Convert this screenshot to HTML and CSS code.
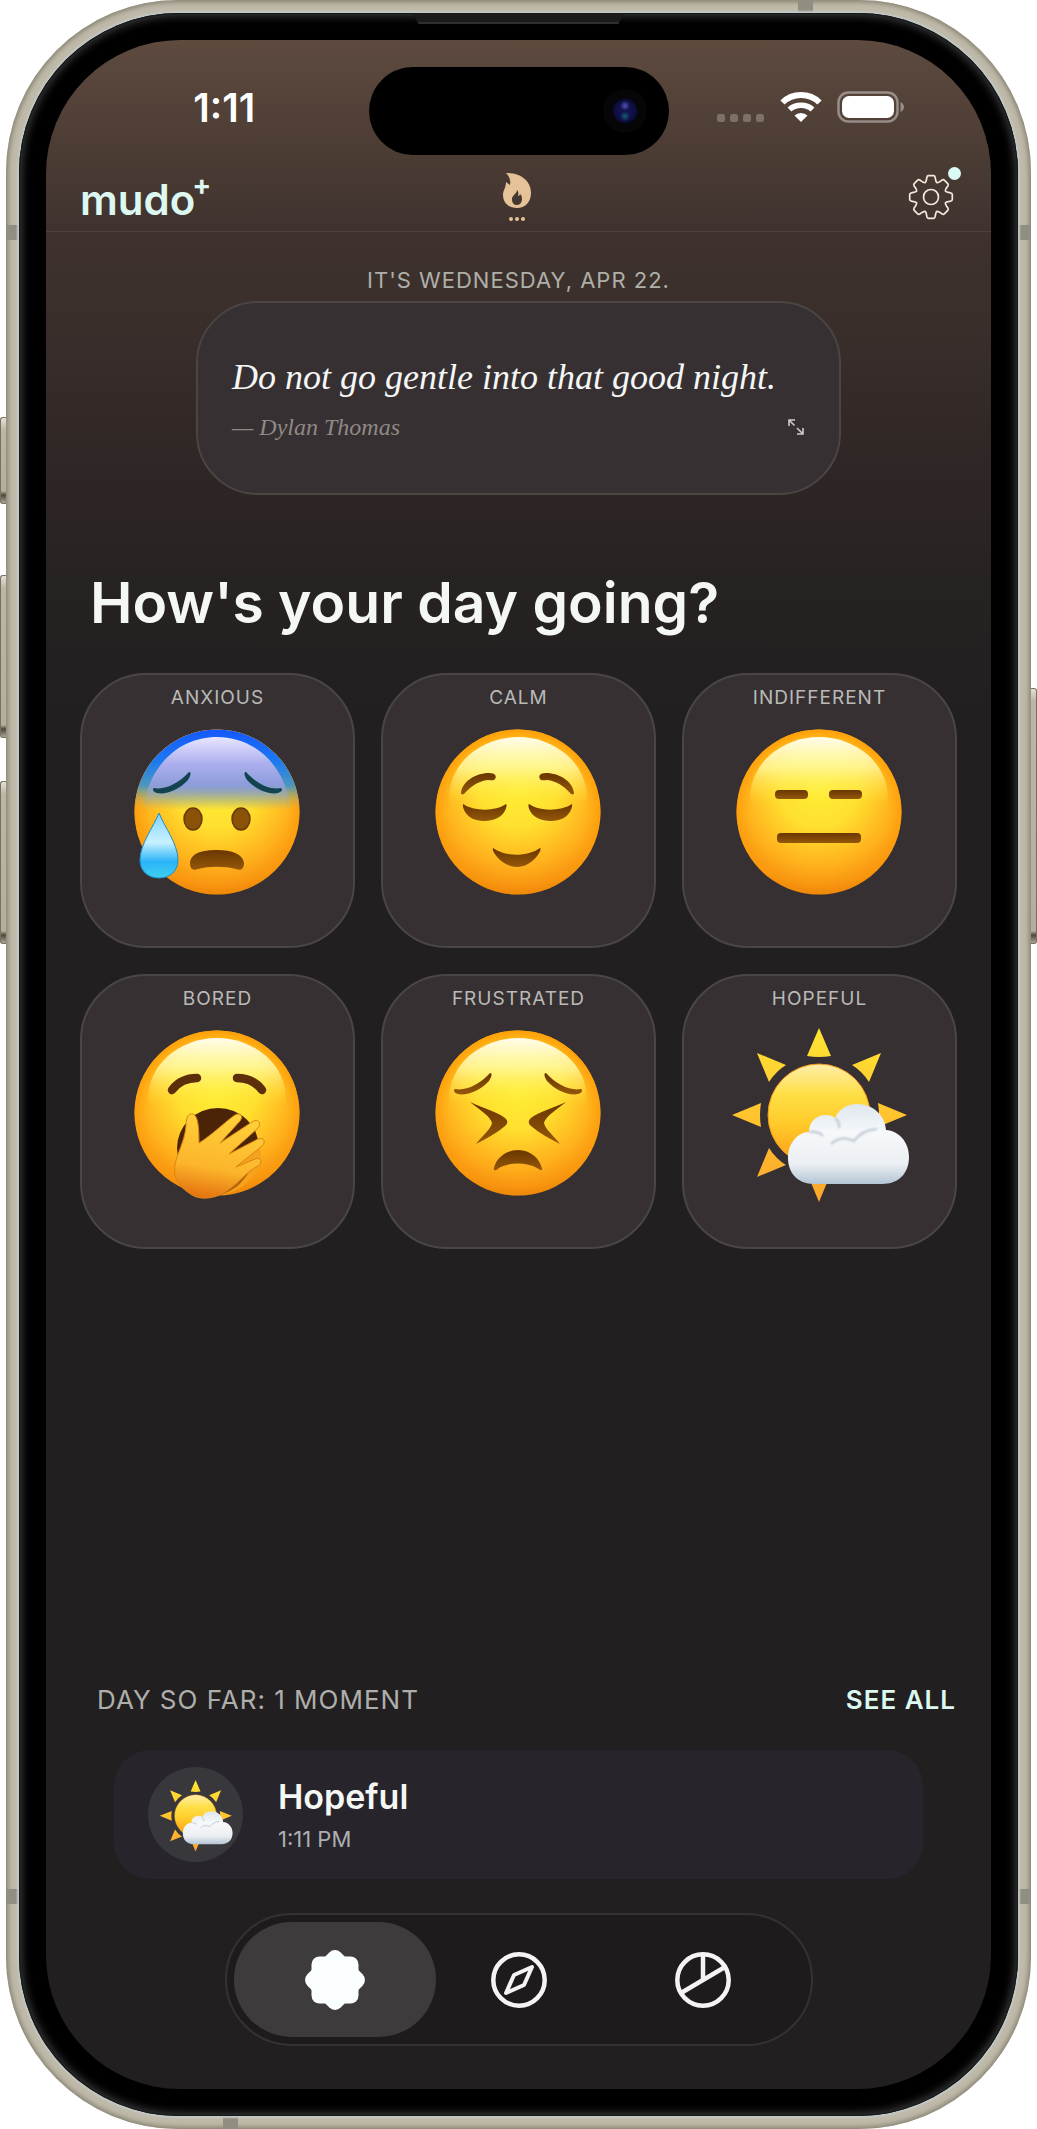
FILE: index.html
```html
<!DOCTYPE html>
<html lang="en">
<head>
<meta charset="utf-8">
<meta name="viewport" content="width=device-width, initial-scale=1">
<title>mudo+</title>
<link rel="stylesheet" href="styles.css">
</head>
<body>
<svg class="defs" aria-hidden="true">
  <defs>
    <radialGradient id="face" cx="89" cy="66" r="112" gradientUnits="userSpaceOnUse">
      <stop offset="0" stop-color="#ffee35"/>
      <stop offset=".35" stop-color="#ffe02f"/>
      <stop offset=".7" stop-color="#ffb01c"/>
      <stop offset=".88" stop-color="#f89410"/>
      <stop offset="1" stop-color="#d96a04"/>
    </radialGradient>
    <radialGradient id="rim" cx="89" cy="96" r="90" gradientUnits="userSpaceOnUse">
      <stop offset=".76" stop-color="#ffa30c" stop-opacity="0"/>
      <stop offset="1" stop-color="#ff9a05"/>
    </radialGradient>
    <linearGradient id="shine" x1="0" y1="16" x2="0" y2="82" gradientUnits="userSpaceOnUse">
      <stop offset="0" stop-color="#fffde8"/>
      <stop offset=".45" stop-color="#fffaa0" stop-opacity=".8"/>
      <stop offset="1" stop-color="#ffec3a" stop-opacity="0"/>
    </linearGradient>
    <linearGradient id="blue" x1="0" y1="7" x2="0" y2="88" gradientUnits="userSpaceOnUse">
      <stop offset="0" stop-color="#1557ff"/>
      <stop offset=".4" stop-color="#1c7af0"/>
      <stop offset=".7" stop-color="#4c97bd"/>
      <stop offset="1" stop-color="#c8b458" stop-opacity="0"/>
    </linearGradient>
    <linearGradient id="brow-sky" x1="0" y1="16" x2="0" y2="88" gradientUnits="userSpaceOnUse">
      <stop offset="0" stop-color="#e6e4ff"/>
      <stop offset=".35" stop-color="#aeb0ee"/>
      <stop offset=".65" stop-color="#8d9cdb"/>
      <stop offset="1" stop-color="#b9b878" stop-opacity="0"/>
    </linearGradient>
    <linearGradient id="ink" x1="0" y1="0" x2="0" y2="1">
      <stop offset="0" stop-color="#6a3600"/>
      <stop offset="1" stop-color="#94580a"/>
    </linearGradient>
    <linearGradient id="tear" x1="0" y1="0" x2="0" y2="1">
      <stop offset="0" stop-color="#7fd4fb"/>
      <stop offset=".45" stop-color="#c9f1ff"/>
      <stop offset=".75" stop-color="#2ab4f8"/>
      <stop offset="1" stop-color="#3fd0ee"/>
    </linearGradient>
    <linearGradient id="hand" x1=".6" y1="0" x2=".4" y2="1">
      <stop offset="0" stop-color="#ffd23a"/>
      <stop offset=".65" stop-color="#fcb52c"/>
      <stop offset="1" stop-color="#e5740f"/>
    </linearGradient>
    <linearGradient id="sun" x1="0" y1="0" x2="0" y2="1">
      <stop offset="0" stop-color="#ffeeaa"/>
      <stop offset=".3" stop-color="#ffdf45"/>
      <stop offset=".6" stop-color="#ffc928"/>
      <stop offset="1" stop-color="#fb9a17"/>
    </linearGradient>
    <linearGradient id="rays" x1="0" y1="4" x2="0" y2="180" gradientUnits="userSpaceOnUse">
      <stop offset="0" stop-color="#ffe534"/>
      <stop offset=".5" stop-color="#ffc42e"/>
      <stop offset="1" stop-color="#fba52c"/>
    </linearGradient>
    <linearGradient id="cloud" x1="0" y1="0" x2="0" y2="1">
      <stop offset="0" stop-color="#dfe7ee"/>
      <stop offset=".35" stop-color="#f6f8fa"/>
      <stop offset=".75" stop-color="#eceff3"/>
      <stop offset="1" stop-color="#b4c5d4"/>
    </linearGradient>
    <filter id="soft" x="-20%" y="-20%" width="140%" height="140%"><feGaussianBlur stdDeviation="1.2"/></filter>
    <clipPath id="head"><circle cx="89" cy="90" r="82.500"/></clipPath>

    <symbol id="base" viewBox="0 0 180 180">
      <circle cx="89" cy="90" r="82.500" fill="url(#face)"/>
      <circle cx="89" cy="90" r="82.500" fill="url(#rim)"/>
      <ellipse cx="89" cy="76" rx="69" ry="61" fill="url(#shine)"/>
    </symbol>
    <path id="worried-brow" d="M26 66C37 68 50 62 61 50C64 50 62 55 60 58C52 67 38 73 29 71C25 70 24 67 26 66Z"/>
    <path id="calm-brow" d="M32 71C33 60 46 51 60 51C66 51 68 54 66 57C65 59 62 58 59 58C49 59 41 65 35 72C33 73 32 72 32 71Z"/>
    <path id="closed-eye" d="M34 82C44 89 66 90 77 82C79 83 76 99 55 99C36 99 33 84 34 82Z"/>
    <path id="squint" d="M41 79C52 84 70 90 76 95C79 98 79 100 76 103C68 110 58 115 47 121C53 113 62 106 63 100C62 94 50 86 41 79Z"/>
    <symbol id="hopeful" viewBox="0 0 180 180">
      <g fill="url(#rays)">
        <path d="M89 5L101 33Q89 35 77 33Z"/>
        <path d="M151 30L139 59Q132 48 122 42Z"/>
        <path d="M177 92L148 104Q150 92 148 80Z"/>
        <path d="M89 179L77 150H101Z"/>
        <path d="M27 154L39 125Q46 136 56 142Z"/>
        <path d="M2 92L31 80Q29 92 31 104Z"/>
        <path d="M27 30L56 42Q46 48 39 59Z"/>
      </g>
      <circle cx="89" cy="92" r="51" fill="url(#sun)" stroke="#f7951a" stroke-width="1"/>
      <path d="M84 161C67 161 58 149 58 135C58 120 68 109 79 109C79 98 87 92 96 92C100 92 103 93 105 95C109 86 117 81 127 81C143 81 155 92 156 107C169 108 179 119 179 134C179 150 169 161 152 161Z" fill="url(#cloud)"/>
      <g fill="none" stroke="#b9c4cf" stroke-width="2" filter="url(#soft)">
        <path d="M79 109Q88 108 93 113M105 95Q110 99 109 105M101 121Q111 112 124 118Q132 107 147 106"/>
      </g>
    </symbol>
    <path id="cog-tooth" d="M-6 -14.4C-4.8 -14.9 -4.7 -16.5 -4.2 -19.5Q-3.8 -21.3 -2.5 -21.3H2.5Q3.8 -21.3 4.2 -19.5C4.7 -16.5 4.8 -14.9 6 -14.4"/>
  </defs>
</svg>

<div class="phone">
  <i class="key key-action"></i><i class="key key-up"></i><i class="key key-down"></i><i class="key key-power"></i>
  <i class="band band-left band-high"></i><i class="band band-right band-high"></i>
  <i class="band band-left band-low"></i><i class="band band-right band-low"></i>
  <i class="band band-top"></i><i class="band band-bottom"></i>
  <div class="bezel">
    <i class="speaker"></i>
    <div class="screen">
      <div class="status">
        <time class="clock">1:11</time>
        <div class="island"><i class="camera"></i></div>
        <div class="signals">
          <svg width="48" height="32" viewBox="0 0 48 32" fill="#fff" fill-opacity=".25" aria-label="No signal">
            <rect y="23" width="8" height="8" rx="2.5"/><rect x="13" y="23" width="8" height="8" rx="2.5"/><rect x="26" y="23" width="8" height="8" rx="2.5"/><rect x="39" y="23" width="8" height="8" rx="2.5"/>
          </svg>
          <svg width="42" height="32" viewBox="0 0 42 32" fill="none" stroke="#fff" aria-label="Wi-Fi">
            <path d="M2.5 11.5Q10 4 21 4T39.500 11.500" stroke-width="6"/>
            <path d="M9.500 18.500Q14 14.200 21 14.200T32.500 18.500" stroke-width="5.500"/>
            <path d="M21 31L14.500 24.500Q17 22 21 22T27.500 24.500Z" fill="#fff" stroke="none"/>
          </svg>
          <svg width="68" height="32" viewBox="0 0 68 32" aria-label="Battery full">
            <rect x="1.500" y="1.500" width="59" height="29" rx="10" fill="none" stroke="#fff" stroke-opacity=".4" stroke-width="2.500"/>
            <rect x="5" y="5" width="52" height="22" rx="7" fill="#fff"/>
            <path d="M63.500 11Q67 13 67 16T63.500 21Z" fill="#fff" fill-opacity=".4"/>
          </svg>
        </div>
      </div>

      <header class="topbar">
        <a class="logo" href="#">mudo<span class="plus">+</span></a>
        <button class="streak" type="button" aria-label="Streak">
          <svg width="28" height="49" viewBox="0 0 28 49" fill="#e6c298">
            <path fill-rule="evenodd" d="M3 0C18 0 28 8 28 20C28 29 22 35 14 35C6 35 0 30 0 22C0 17 3 15 3 9L7 12C8 7 6 3 3 0ZM14 17C14 21 9 22 9 26C9 30 11 32 14 32C17 32 19 29 19 26C19 23 18 22 17 21C17 22 16 23 15 23C16 20 15 18 14 17Z"/>
            <circle cx="8" cy="46" r="2"/><circle cx="14" cy="46" r="2"/><circle cx="20" cy="46" r="2"/>
          </svg>
        </button>
        <button class="settings" type="button" aria-label="Settings">
          <svg width="46" height="46" viewBox="-23 -23 46 46" fill="none" stroke="#f5e9dc" stroke-width="1.700">
            <circle r="7.500"/>
            <use href="#cog-tooth"/><use href="#cog-tooth" transform="rotate(45)"/><use href="#cog-tooth" transform="rotate(90)"/><use href="#cog-tooth" transform="rotate(135)"/><use href="#cog-tooth" transform="rotate(180)"/><use href="#cog-tooth" transform="rotate(225)"/><use href="#cog-tooth" transform="rotate(270)"/><use href="#cog-tooth" transform="rotate(315)"/>
          </svg>
          <i class="notice"></i>
        </button>
      </header>

      <main class="content">
        <p class="date">IT'S WEDNESDAY, APR 22.</p>
        <figure class="quote">
          <blockquote class="quote-text">Do not go gentle into that good night.</blockquote>
          <div class="quote-foot">
            <figcaption class="quote-by">— Dylan Thomas</figcaption>
            <button class="expand" type="button" aria-label="Expand quote">
              <svg width="18" height="18" viewBox="0 0 18 18" fill="none" stroke="#cfcbc8" stroke-width="1.600"><path d="M2 8V2H8M2 2L7.500 7.500M10 10L16 16M10 16H16V10"/></svg>
            </button>
          </div>
        </figure>

        <h1 class="question">How's your day going?</h1>

        <div class="moods">
          <button class="mood" type="button"><span class="mood-name">ANXIOUS</span>
            <svg class="emoji" viewBox="0 0 180 180">
              <use href="#base"/>
              <rect x="6" y="6" width="168" height="84" fill="url(#blue)" clip-path="url(#head)"/>
              <path d="M15 88C21 40 54 15 89 15C124 15 157 40 163 88Z" fill="url(#brow-sky)"/>
              <g fill="#12444f"><use href="#worried-brow"/><use href="#worried-brow" transform="translate(179) scale(-1 1)"/></g>
              <g fill="#8a5207" stroke="#69390a" stroke-width="1.500"><ellipse cx="65" cy="97" rx="9" ry="11"/><ellipse cx="113" cy="97" rx="9" ry="11"/></g>
              <path d="M62 141C63 131 74 128 89 128C104 128 115 132 116 141C116 147 113 149 108 147C96 144 82 144 70 147C65 149 62 147 62 141Z" fill="url(#ink)"/>
              <path d="M31 91C36 104 50 122 50 138C50 149 42 156 31 156C20 156 12 149 12 138C12 122 26 104 31 91Z" fill="url(#tear)" stroke="#1a8fd0"/>
            </svg></button>
          <button class="mood" type="button"><span class="mood-name">CALM</span>
            <svg class="emoji" viewBox="0 0 180 180">
              <use href="#base"/>
              <g fill="url(#ink)"><use href="#calm-brow"/><use href="#calm-brow" transform="translate(177) scale(-1 1)"/>
              <use href="#closed-eye"/><use href="#closed-eye" transform="translate(177) scale(-1 1)"/>
              <path d="M64 126C76 135 99 135 111 126C114 127 104 145 88 145C73 145 62 129 64 126Z"/></g>
            </svg></button>
          <button class="mood" type="button"><span class="mood-name">INDIFFERENT</span>
            <svg class="emoji" viewBox="0 0 180 180">
              <use href="#base"/>
              <g fill="url(#ink)"><rect x="45" y="68" width="33" height="9" rx="4"/><rect x="99" y="68" width="33" height="9" rx="4"/><rect x="47" y="111" width="84" height="10" rx="4"/></g>
            </svg></button>
          <button class="mood" type="button"><span class="mood-name">BORED</span>
            <svg class="emoji" viewBox="0 0 180 180">
              <use href="#base"/>
              <path d="M44 67C50 59 59 55 69 55M134 67C128 59 119 55 109 55" fill="none" stroke="#5c2f0a" stroke-width="8.500" stroke-linecap="round"/>
              <ellipse cx="90" cy="125" rx="41" ry="40" fill="#4b2407"/>
              <path d="M132 122L134 142C122 160 108 170 93 171L88 150Z" fill="#f5a31c"/>
              <path d="M108 144L101 131L128 117L131 124Z" fill="#4b2407"/>
              <path d="M122 147C115 160 106 168 92 172Q100 166 108 154Z" fill="#b9630c"/>
              <path d="M58 103C58 93 61 90 65 91C70 93 71 104 71 120C84 112 98 98 107 92C112 89 116 93 112 98L92 120L124 99C130 95 134 100 130 105L101 131L128 117C135 113 139 118 134 123L108 144L127 136C133 134 135 139 130 143C118 149 112 159 100 167C90 175 74 178 64 172C50 163 45 156 47 142C49 130 57 118 58 103Z" fill="url(#hand)" stroke="#d98714"/>
            </svg></button>
          <button class="mood" type="button"><span class="mood-name">FRUSTRATED</span>
            <svg class="emoji" viewBox="0 0 180 180">
              <use href="#base"/>
              <g fill="url(#ink)"><use href="#worried-brow"/><use href="#worried-brow" transform="translate(178) scale(-1 1)"/>
              <use href="#squint"/><use href="#squint" transform="translate(178) scale(-1 1)"/>
              <path d="M65 145C67 136 76 127 89 127C102 127 111 136 113 146C113 148 111 147 108 145C98 139 80 139 70 145C67 148 64 148 65 145Z"/></g>
            </svg></button>
          <button class="mood" type="button"><span class="mood-name">HOPEFUL</span>
            <svg class="emoji" viewBox="0 0 180 180"><use href="#hopeful"/></svg></button>
        </div>

        <section class="day">
          <div class="day-head">
            <h2 class="day-title">DAY SO FAR: 1 MOMENT</h2>
            <a class="see-all" href="#">SEE ALL</a>
          </div>
          <a class="moment" href="#">
            <span class="moment-icon"><svg width="74" height="74" viewBox="0 0 180 180"><use href="#hopeful"/></svg></span>
            <span class="moment-text"><strong class="moment-name">Hopeful</strong><time class="moment-time">1:11 PM</time></span>
          </a>
        </section>
      </main>

      <nav class="tabs">
        <button class="tab tab-on" type="button" aria-label="Today">
          <svg width="60" height="60" viewBox="-30 -30 60 60" fill="#fbffff"><rect x="-23.500" y="-23.500" width="47" height="47" rx="8"/><rect x="-23.500" y="-23.500" width="47" height="47" rx="8" transform="rotate(45)"/></svg>
        </button>
        <button class="tab" type="button" aria-label="Explore">
          <svg width="60" height="60" viewBox="-30 -30 60 60" fill="none" stroke="#f7f2f4" stroke-linejoin="round"><circle r="25.700" stroke-width="4.500"/><path d="M13 -13L5 5L-13 13L-5 -5Z" stroke-width="4"/></svg>
        </button>
        <button class="tab" type="button" aria-label="Insights">
          <svg width="60" height="60" viewBox="-30 -30 60 60" fill="none" stroke="#f7f2f4" stroke-width="4.500"><circle r="25.700"/><path d="M0 -26V0M22 -13L-22 13"/></svg>
        </button>
      </nav>
    </div>
  </div>
</div>
</body>
</html>
```
FILE: styles.css
```css
* { box-sizing: border-box; }

body {
  margin: 0;
  background: #fff;
  font-family: Inter, "Liberation Sans", sans-serif;
  color: #f5f7f4;
}

h1, h2, p, figure, blockquote { margin: 0; }
button { padding: 0; border: 0; background: none; font: inherit; color: inherit; }
a { color: inherit; text-decoration: none; }
svg { display: block; }

.defs { position: absolute; width: 0; height: 0; }

/* Device shell */
.phone {
  position: relative;
  display: flex;
  min-height: 100vh;
  margin: 0 6px;
  padding: 13px;
  border-radius: 172px;
  background: #bfb9a9;
  box-shadow: inset 0 0 5px 2px #868070;
}

.bezel {
  position: relative;
  display: flex;
  flex: 1;
  min-width: 0;
  padding: 27px;
  border-radius: 160px;
  background: #000;
  box-shadow: 0 0 2px 2px #c4c9c7, inset 0 0 0 1px #15191a, inset 0 0 9px 3px #3a3b3b;
}

.speaker {
  position: absolute;
  top: 1px;
  left: 50%;
  width: 212px;
  height: 10px;
  margin-left: -106px;
  background: #1b1b1b;
  border-bottom: 2px solid #303030;
  clip-path: polygon(0 0, 100% 0, 97% 100%, 3% 100%);
}

.key {
  position: absolute;
  left: -6px;
  width: 6px;
  border: 1px solid #77715f;
  border-right: 0;
  border-radius: 3px 0 0 3px;
  background: linear-gradient(#e4e0d8, #bdb6a5 12px, #b5ae9c calc(100% - 12px), #4d483d calc(100% - 8px), #aaa494);
}
.key-action { top: 417px; height: 87px; }
.key-up { top: 575px; height: 163px; }
.key-down { top: 781px; height: 163px; }
.key-power {
  top: 688px;
  right: -6px;
  left: auto;
  height: 256px;
  border-right: 1px solid #77715f;
  border-left: 0;
  border-radius: 0 3px 3px 0;
}

.band { position: absolute; width: 13px; height: 15px; background: #908e80; }
.band-left { left: 0; }
.band-right { right: 0; }
.band-high { top: 225px; }
.band-low { bottom: 225px; }
.band-top, .band-bottom { width: 15px; height: 13px; }
.band-top { top: 0; right: 218px; }
.band-bottom { bottom: 0; left: 217px; }

.screen {
  display: flex;
  flex: 1;
  flex-direction: column;
  min-width: 0;
  padding-bottom: 43px;
  border-radius: 134px;
  background: linear-gradient(#5e4a3f, #4a3b33 120px, #3e312e 200px, #3a2f2b 270px, #2e2625 440px, #262222 560px, #221f20 680px);
}

/* Status bar */
.status {
  display: grid;
  grid-template-columns: 1fr 300px 1fr;
  align-items: center;
  padding-top: 27px;
}
.clock {
  padding: 0 0 6px 34px;
  font-size: 39px;
  font-weight: 600;
  line-height: 44px;
  text-align: center;
  color: #fff;
}
.island {
  display: flex;
  align-items: center;
  justify-content: flex-end;
  height: 88px;
  padding-right: 22px;
  border-radius: 44px;
  background: #000;
}
.camera {
  width: 44px;
  height: 44px;
  border-radius: 50%;
  background: radial-gradient(circle at 50% 38%, #4a45a0 0 1px, transparent 5px), radial-gradient(circle at 50% 62%, #145068 0 1px, transparent 5px), radial-gradient(circle, #12124e 0 6px, #0c0c3c 11px, #060507 13px);
}
.signals {
  display: flex;
  justify-content: center;
  gap: 15px;
  padding: 0 38px 8px 0;
}

/* App header */
.topbar {
  display: grid;
  grid-template-columns: 1fr auto 1fr;
  align-items: center;
  height: 77px;
  padding: 8px 37px 0 34px;
  border-bottom: 1px solid #4c433f;
}
.logo {
  display: flex;
  padding-top: 6px;
  font-size: 42px;
  font-weight: 600;
  line-height: 44px;
  color: #dcf8f0;
}
.plus { margin-left: -3px; font-size: 28px; font-weight: 700; line-height: 14px; }
.streak { display: block; }
.settings { position: relative; justify-self: end; }
.notice {
  position: absolute;
  top: -7px;
  right: -7px;
  width: 13px;
  height: 13px;
  border-radius: 50%;
  background: #dbfaf3;
}

/* Main column */
.content {
  display: flex;
  flex: 1;
  flex-direction: column;
  padding: 32px 34px 34px;
}
.date {
  font-size: 22px;
  line-height: 32px;
  letter-spacing: 1px;
  text-align: center;
  color: #aeafa9;
}
.quote {
  display: flex;
  flex-direction: column;
  justify-content: center;
  align-self: center;
  width: calc(100% - 232px);
  height: 194px;
  margin-top: 5px;
  padding: 10px 34px 0;
  border: 2px solid #4b4543;
  border-radius: 62px;
  background: #363033;
  font-family: "Liberation Serif", serif;
  font-style: italic;
}
.quote-text { font-size: 36px; line-height: 48px; white-space: nowrap; }
.quote-foot { display: flex; align-items: center; justify-content: space-between; }
.quote-by { font-size: 24px; line-height: 52px; color: #8f8a83; }

.question {
  margin: 74px 10px 36px;
  font-size: 57px;
  font-weight: 600;
  line-height: 68px;
}

.moods { display: grid; grid-template-columns: repeat(3, 1fr); gap: 26px; }
.mood {
  display: flex;
  flex-direction: column;
  align-items: center;
  gap: 12px;
  height: 275px;
  padding-top: 11px;
  border: 2px solid #4a4647;
  border-radius: 66px;
  background: #363033;
}
.mood-name { font-size: 19px; line-height: 24px; letter-spacing: 1px; color: #b9bab6; }
.emoji { width: 180px; height: 180px; }

/* Logged moments */
.day { margin-top: auto; }
.day-head { display: flex; align-items: center; justify-content: space-between; margin: 0 1px 34px 17px; line-height: 32px; letter-spacing: 1px; }
.day-title { font-size: 26px; font-weight: 400; color: #aeafab; }
.see-all { font-size: 26px; font-weight: 600; color: #dcf8f0; }
.moment {
  display: flex;
  align-items: center;
  gap: 35px;
  height: 129px;
  margin: 0 34px;
  padding: 0 34px;
  border-radius: 36px;
  background: #27252b;
}
.moment-icon {
  display: grid;
  place-items: center;
  width: 95px;
  height: 95px;
  border-radius: 50%;
  background: #38373b;
}
.moment-text { display: flex; flex-direction: column; padding-top: 2px; }
.moment-name { font-size: 34px; font-weight: 600; line-height: 46px; }
.moment-time { font-size: 22px; line-height: 38px; color: #aeafb1; }

/* Tab bar */
.tabs {
  display: flex;
  align-self: center;
  padding: 7px;
  border: 2px solid #353233;
  border-radius: 67px;
  background: #1e1b1c;
}
.tab { display: grid; place-items: center; width: 202px; height: 115px; border-radius: 58px; }
.tab + .tab { margin-left: -18px; }
.tab-on { background: #3e3b3c; }
```
